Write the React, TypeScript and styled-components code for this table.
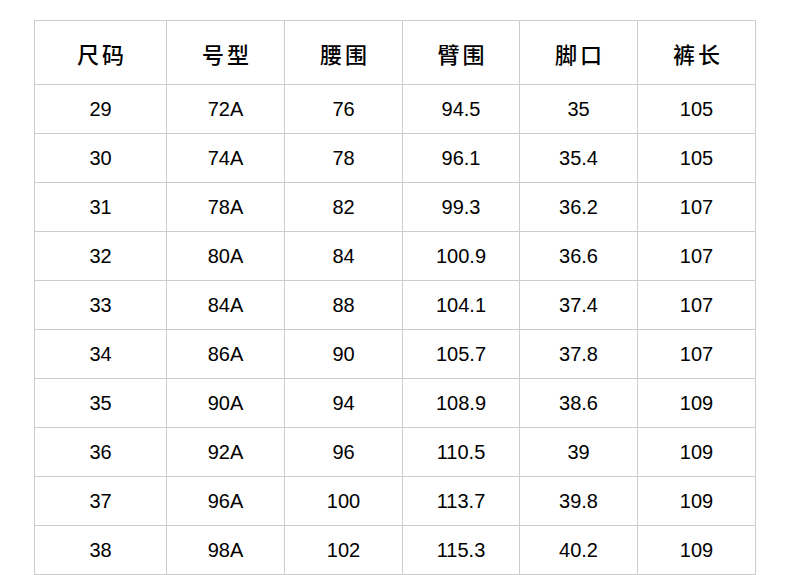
import React from 'react'
import styled, { createGlobalStyle } from 'styled-components'

const GlobalStyle = createGlobalStyle`
    html, body {
        margin: 0;
        padding: 0;
        background: #fff;
    }
`;

const headers = ['尺码', '号型', '腰围', '臂围', '脚口', '裤长']

const rows = [
    ['29', '72A', '76', '94.5', '35', '105'],
    ['30', '74A', '78', '96.1', '35.4', '105'],
    ['31', '78A', '82', '99.3', '36.2', '107'],
    ['32', '80A', '84', '100.9', '36.6', '107'],
    ['33', '84A', '88', '104.1', '37.4', '107'],
    ['34', '86A', '90', '105.7', '37.8', '107'],
    ['35', '90A', '94', '108.9', '38.6', '109'],
    ['36', '92A', '96', '110.5', '39', '109'],
    ['37', '96A', '100', '113.7', '39.8', '109'],
    ['38', '98A', '102', '115.3', '40.2', '109'],
]

const colWidths = [132, 118, 118, 117, 118, 118]

export default function App() {
    return (
        <Page>
            <GlobalStyle />
            <SizeTable>
                <colgroup>
                    {colWidths.map((w, i) => <col key={i} style={{ width: w }} />)}
                </colgroup>
                <thead>
                    <tr>
                        {headers.map(h => <HeadCell key={h}>{h}</HeadCell>)}
                    </tr>
                </thead>
                <tbody>
                    {rows.map(r => (
                        <tr key={r[0]}>
                            {r.map((v, i) => <Cell key={i}>{v}</Cell>)}
                        </tr>
                    ))}
                </tbody>
            </SizeTable>
        </Page>
    );
}

const Page = styled.div`
    padding: 20px 34px 0 34px;
`;

const SizeTable = styled.table`
    border-collapse: collapse;
    table-layout: fixed;
    width: 722px;
`;

const HeadCell = styled.th`
    height: 63px;
    padding: 0;
    border: 1px solid #cccccc;
    font-family: "Noto Sans CJK SC", "Liberation Sans", sans-serif;
    font-size: 22px;
    font-weight: 500;
    letter-spacing: 3px;
    text-indent: 3px;
    color: #000;
    text-align: center;
    vertical-align: middle;
`;

const Cell = styled.td`
    height: 48px;
    padding: 0;
    border: 1px solid #cccccc;
    font-family: "Liberation Sans", Arial, sans-serif;
    font-size: 20px;
    color: #000;
    text-align: center;
    vertical-align: middle;
`;
